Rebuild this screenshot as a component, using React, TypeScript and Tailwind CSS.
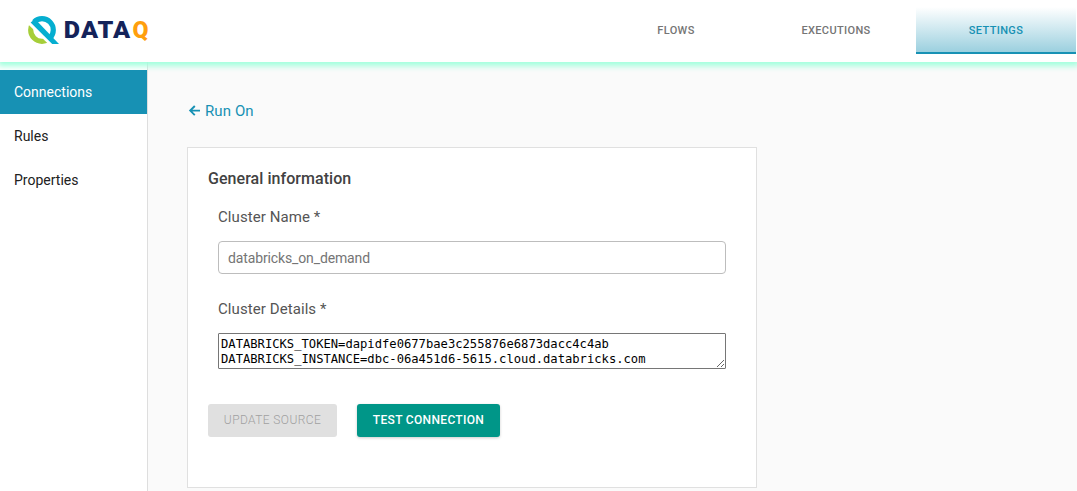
import React from "react";

const tabs = ["FLOWS", "EXECUTIONS", "SETTINGS"];
const sections = ["Connections", "Rules", "Properties"];

function Logo() {
  return (
    <svg width="124" height="32" viewBox="0 0 124 32" className="mt-[14px] ml-[27px] shrink-0">
      <defs>
        <clipPath id="ring-lower">
          <path d="M0 9.2 L24 32.6 H0 Z" />
        </clipPath>
        <clipPath id="ring-upper">
          <path d="M4 5 L31 32 H32 V0 H4 Z" />
        </clipPath>
      </defs>
      <circle cx="15" cy="16" r="11.3" fill="none" stroke="#a6ce39" strokeWidth="5.2" clipPath="url(#ring-lower)" />
      <circle cx="15" cy="16" r="11.3" fill="none" stroke="#05aed0" strokeWidth="5.2" clipPath="url(#ring-upper)" />
      <path d="M3.6 8.6 L8 5 L32 30 H25.2 Z" fill="#05aed0" />
      <g fontFamily="Roboto, sans-serif" fontWeight="900" fontSize="23">
        <text x="36.8" y="23.8" textLength="67.5" lengthAdjust="spacingAndGlyphs" letterSpacing="1" fill="#14235a">DATA</text>
        <text x="105.6" y="23.8" textLength="16" lengthAdjust="spacingAndGlyphs" fill="#ff9f0d">Q</text>
      </g>
    </svg>
  );
}

export default function App() {
  return (
    <div className="flex h-[491px] w-[1077px] flex-col overflow-hidden bg-[#fafafa] font-['Roboto',sans-serif] text-[#212121]">
      <header className="relative z-10 flex h-[62px] shrink-0 justify-between bg-white pr-px shadow-[0_2px_6px_2px_#9fffdc]">
        <Logo />
        <nav className="flex pt-[7px]">
          {tabs.map((tab) => (
            <button
              key={tab}
              className={
                tab === "SETTINGS"
                  ? "h-[47px] w-40 border-b-2 border-[#1791b4] bg-linear-to-b from-white to-[#9bd0df] pt-[3px] text-[11px] font-medium tracking-[0.35px] text-[#1791b4]"
                  : "h-[47px] w-40 border-b-2 border-transparent pt-[3px] text-[11px] font-medium tracking-[0.35px] text-[#757575]"
              }
            >
              {tab}
            </button>
          ))}
        </nav>
      </header>
      <div className="flex min-h-0 flex-1">
        <aside className="w-[148px] shrink-0 border-r border-[#dedede] bg-white pt-2">
          {sections.map((section) => (
            <div
              key={section}
              className={
                section === "Connections"
                  ? "relative z-20 flex h-11 items-center bg-[#1791b4] pl-3.5 text-sm text-white"
                  : "flex h-11 items-center pl-3.5 text-sm"
              }
            >
              {section}
            </div>
          ))}
        </aside>
        <main className="pl-[39px]">
          <a className="mt-[38px] flex h-[22px] items-center gap-1 text-[15px] tracking-[0.1px] text-[#1791b4]">
            <svg width="14" height="14" viewBox="0 0 14 14" fill="none" stroke="currentColor" strokeWidth="1.9">
              <path d="M13 6.6H3.2M7.8 2 3.2 6.6l4.6 4.6" />
            </svg>
            Run On
          </a>
          <section className="mt-[25px] h-[341px] w-[570px] border border-[#e0e0e0] bg-white pl-5">
            <h2 className="mt-5 h-[22px] text-base leading-[22px] font-medium tracking-[0.05px] text-[#424242]">General information</h2>
            <div className="ml-2.5 w-[508px] text-[15px] text-[#555]">
              <label className="mt-[17px] block h-5 leading-5 tracking-[0.08px]">Cluster Name *</label>
              <input
                readOnly
                value="databricks_on_demand"
                className="mt-[14px] block h-[33px] w-full rounded border border-[#bdbdbd] px-[9px] text-sm tracking-[-0.13px] text-[#757575] outline-none"
              />
              <label className="mt-[25px] block h-5 leading-5 tracking-[0.08px]">Cluster Details *</label>
              <textarea
                readOnly
                wrap="off"
                value={"DATABRICKS_TOKEN=dapidfe0677bae3c255876e6873dacc4c4ab\nDATABRICKS_INSTANCE=dbc-06a451d6-5615.cloud.databricks.com"}
                className="mt-[14px] block h-9 w-full resize overflow-hidden rounded-[1px] border border-[#767676] px-0.5 pt-[3px] font-['DejaVu_Sans_Mono',monospace] text-[12.17px] leading-[15px] text-black outline-none"
              />
            </div>
            <div className="mt-[35px] flex gap-5 text-xs">
              <button className="h-[33px] w-[129px] rounded-[3px] bg-[#e0e0e0] pb-0.5 font-light tracking-[0.4px] text-[#a0a0a0]">
                UPDATE SOURCE
              </button>
              <button className="h-[33px] w-[143px] rounded-[3px] bg-[#009688] pb-0.5 font-medium tracking-[0.33px] text-white shadow-[0_1px_3px_rgba(0,0,0,0.2)]">
                TEST CONNECTION
              </button>
            </div>
          </section>
        </main>
      </div>
    </div>
  );
}
